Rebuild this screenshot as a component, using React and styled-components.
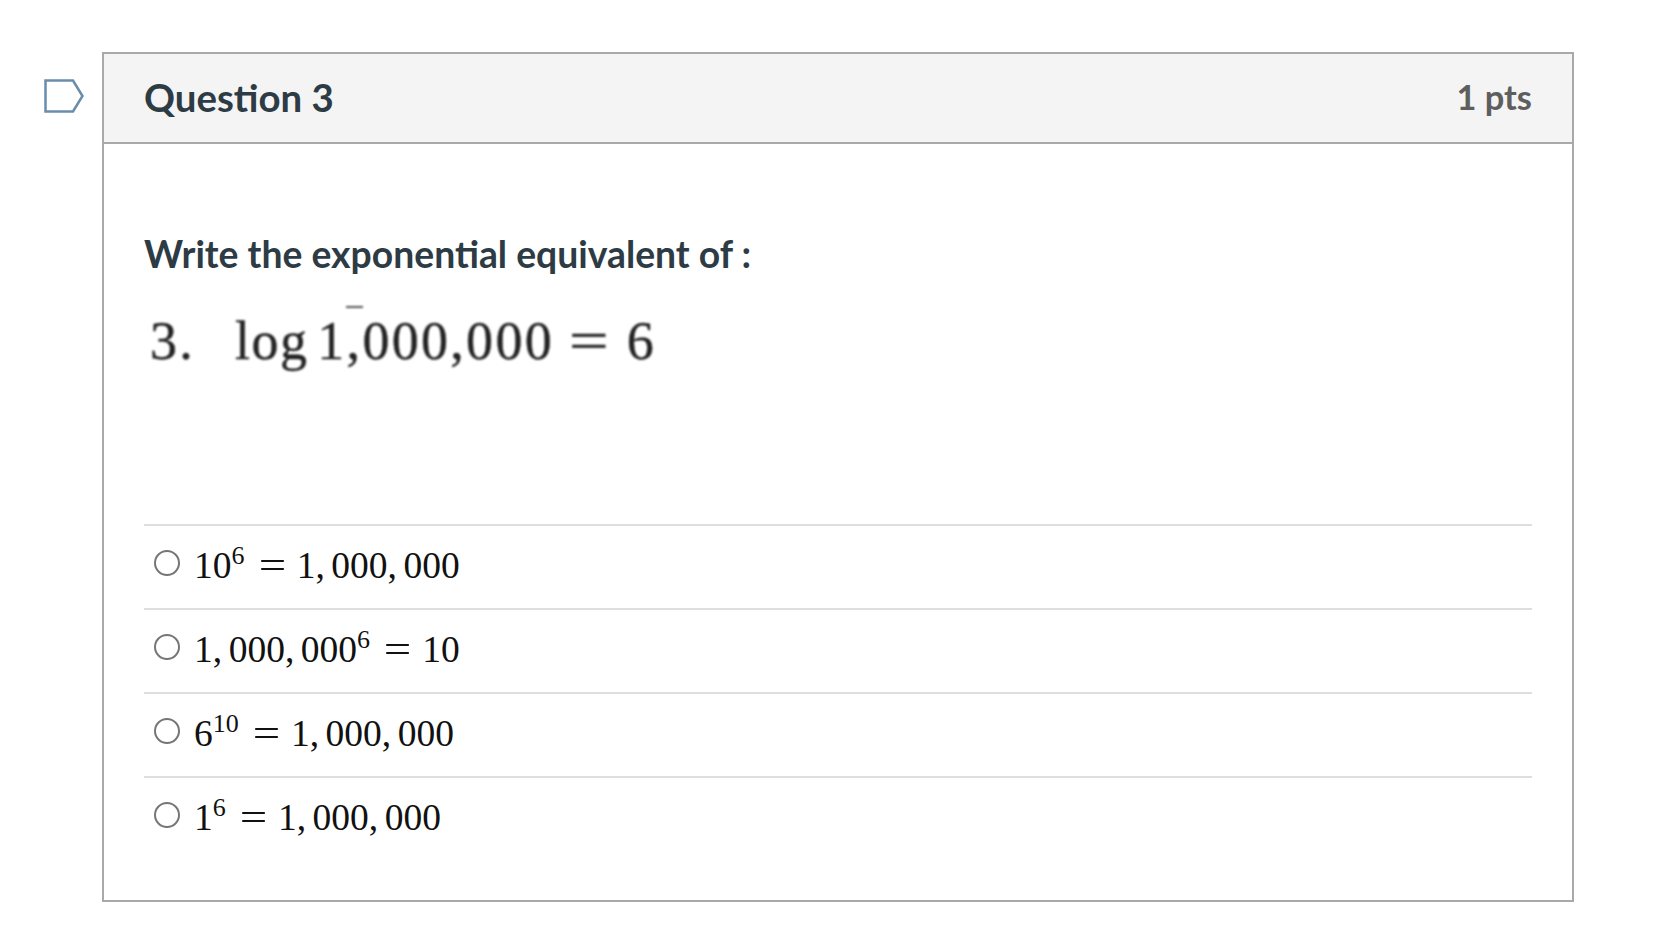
import React from 'react';
import styled, { createGlobalStyle } from 'styled-components';

const GlobalStyle = createGlobalStyle`
  html, body {
    margin: 0;
    background: #fff;
  }
`;

const Page = styled.div`
  display: flex;
  align-items: flex-start;
  padding: 52px 0 0 44px;
  font-family: Lato, "Liberation Sans", sans-serif;
  font-feature-settings: "liga" 1;
`;

const FlagSlot = styled.div`
  width: 58px;
  padding-top: 27px;
  flex: none;
`;

const Card = styled.section`
  width: 1472px;
  height: 850px;
  box-sizing: border-box;
  border: 2px solid #a9a9a9;
`;

const Header = styled.header`
  display: flex;
  align-items: center;
  justify-content: space-between;
  height: 88px;
  padding: 0 40px;
  background: #f4f4f4;
  border-bottom: 2px solid #a9a9a9;
`;

const Title = styled.h2`
  margin: -2px 0 0;
  font-size: 38.4px;
  font-weight: 700;
  color: #2d3b45;
`;

const Points = styled.span`
  margin-top: -4px;
  font-size: 34.4px;
  font-weight: 700;
  color: #5e5e5e;
`;

const Body = styled.div`
  padding: 88px 40px 0;
`;

const Prompt = styled.p`
  margin: 0;
  font-size: 37.3px;
  font-weight: 700;
  line-height: 44px;
  color: #2d3b45;
`;

const Equation = styled.div`
  display: flex;
  gap: 40px;
  margin: 35px 0 0 6px;
  height: 213px;
  font-family: "Liberation Serif", serif;
  font-size: 54px;
  line-height: 60px;
  letter-spacing: 2.3px;
  color: #222;
  -webkit-text-stroke: 0.4px #222;
  filter: blur(0.8px);
  white-space: pre;
`;

const LogPart = styled.span`
  position: relative;
  display: flex;
  gap: 12px;

  &::before {
    content: '';
    position: absolute;
    left: 111px;
    top: -5px;
    width: 17px;
    height: 2px;
    background: #555;
  }
`;

const LogWord = styled.span`
  letter-spacing: 1.4px;
`;

const LogValue = styled.span`
  margin: 0 2px 0 -3px;
`;

const EquationEq = styled.span`
  display: inline-block;
  margin: 0 8px 0 6px;
  transform: scaleX(1.3);
`;

const Answer = styled.label`
  display: flex;
  align-items: center;
  box-sizing: border-box;
  height: 84px;
  padding: 0 0 2px 10px;
  border-top: 2px solid #dedede;
`;

const Radio = styled.input.attrs({ type: 'radio' })`
  appearance: none;
  flex: none;
  width: 26px;
  height: 26px;
  margin: -6px 14px 0 0;
  border: 2px solid #767676;
  border-radius: 50%;
`;

const MathText = styled.span`
  margin-top: -2px;
  font-family: "Liberation Serif", serif;
  font-size: 37.5px;
  color: #111;
  white-space: pre;
`;

const Sup = styled.sup`
  font-size: 26px;
  line-height: 0;
  vertical-align: 14px;
`;

const Eq = styled.span`
  display: inline-block;
  margin: 0 14px 0 17px;
  transform: scaleX(1.3);
`;

const Comma = styled.span`
  margin-right: 6.5px;
`;

const Million = () => (
  <>
    1<Comma>,</Comma>000<Comma>,</Comma>000
  </>
);

const QuizFlag = () => (
  <svg width="40" height="34" viewBox="0 0 40 34" fill="none">
    <path d="M1.5 1.5H29L38.5 17L29 32.5H1.5Z" stroke="#6a8dab" strokeWidth="2.5" />
  </svg>
);

export default function App() {
  return (
    <Page>
      <GlobalStyle />
      <FlagSlot>
        <QuizFlag />
      </FlagSlot>
      <Card>
        <Header>
          <Title>Question 3</Title>
          <Points>1 pts</Points>
        </Header>
        <Body>
          <Prompt>Write the exponential equivalent of :</Prompt>
          <Equation>
            <span>3.</span>
            <LogPart>
              <LogWord>log</LogWord>
              <LogValue>1,000,000</LogValue>
              <EquationEq>=</EquationEq>
              <span>6</span>
            </LogPart>
          </Equation>
          <Answer>
            <Radio name="q3" />
            <MathText>
              10<Sup>6</Sup><Eq>=</Eq><Million />
            </MathText>
          </Answer>
          <Answer>
            <Radio name="q3" />
            <MathText>
              <Million /><Sup>6</Sup><Eq>=</Eq>10
            </MathText>
          </Answer>
          <Answer>
            <Radio name="q3" />
            <MathText>
              6<Sup>10</Sup><Eq>=</Eq><Million />
            </MathText>
          </Answer>
          <Answer>
            <Radio name="q3" />
            <MathText>
              1<Sup>6</Sup><Eq>=</Eq><Million />
            </MathText>
          </Answer>
        </Body>
      </Card>
    </Page>
  );
}
